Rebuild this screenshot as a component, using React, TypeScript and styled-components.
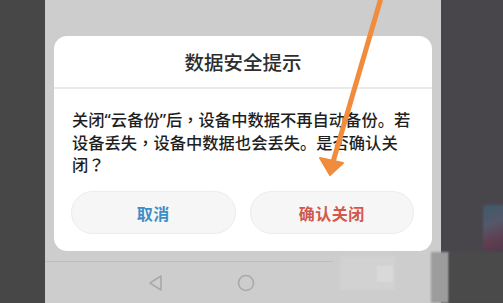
import React from 'react';
import styled, { createGlobalStyle } from 'styled-components';

const GlobalStyle = createGlobalStyle`
    html, body {
        margin: 0;
        padding: 0;
        background: #474747;
    }
    * {
        box-sizing: border-box;
    }
`;

const Screen = styled.div`
    position: relative;
    width: 503px;
    height: 303px;
    display: flex;
    overflow: hidden;
    font-family: 'Noto Sans CJK SC', 'Noto Sans', sans-serif;
`;

const SideStrip = styled.div<{ $width: number; $color: string }>`
    width: ${(p) => p.$width}px;
    flex-shrink: 0;
    background: ${(p) => p.$color};
`;

const RightSide = styled.div`
    position: relative;
    flex: 1;
    background: #48464b;
`;

const Phone = styled.div`
    width: 396px;
    flex-shrink: 0;
    display: flex;
    flex-direction: column;
    padding-top: 36px;
    background: #cdcdcd;
`;

const Dialog = styled.div`
    margin: 0 9px;
    background: #ffffff;
    border-radius: 13px;
    display: flex;
    flex-direction: column;
`;

const Title = styled.div`
    height: 53px;
    display: flex;
    align-items: center;
    justify-content: center;
    font-size: 19.5px;
    font-weight: 500;
    color: #2e2e2e;
    border-bottom: 2px solid #ebebeb;
`;

const Message = styled.div`
    padding: 19px 18px 0 18px;
    font-size: 16.3px;
    font-weight: 500;
    line-height: 22px;
    color: #1f1f1f;
`;

// narrow curly quotes, as the device font draws them
const Quote = styled.span`
    font-family: 'Noto Sans', sans-serif;
`;

// centred full-width comma and question mark
const Punct = styled.span`
    font-family: 'Noto Sans CJK TC', sans-serif;
`;

const Actions = styled.div`
    display: flex;
    gap: 14px;
    padding: 16px 18px 17px 17px;
`;

const ActionButton = styled.button<{ $color: string }>`
    flex: 1;
    height: 43px;
    border: 1px solid #ececec;
    border-radius: 22px;
    background: #f6f6f6;
    color: ${(p) => p.$color};
    font-family: inherit;
    font-size: 16px;
    font-weight: 700;
    letter-spacing: 0.5px;
`;

const NavBar = styled.div`
    margin-top: 10px;
    flex: 1;
    display: flex;
    align-items: center;
    padding-left: 101px;
    gap: 70px;
    border-top: 1px solid #bdbdbd;
    width: 288px;
`;

const NavIcon = styled.svg`
    width: 20px;
    height: 20px;
`;

const Blur = styled.div<{ $x: number; $y: number; $w: number; $h: number; $color: string }>`
    position: absolute;
    left: ${(p) => p.$x}px;
    top: ${(p) => p.$y}px;
    width: ${(p) => p.$w}px;
    height: ${(p) => p.$h}px;
    background: ${(p) => p.$color};
    filter: blur(1px);
`;

const Thumb = styled.div`
    position: absolute;
    left: 42px;
    top: 205px;
    width: 22px;
    height: 47px;
    border-radius: 3px 0 0 0;
    background: linear-gradient(160deg, #3c6377 0%, #5b6078 40%, #6a3d55 70%, #53344a 100%);
    opacity: 0.7;
    filter: blur(1px);
`;

const Arrow = styled.svg`
    position: absolute;
    left: 0;
    top: 0;
    pointer-events: none;
`;

export default function App() {
    return (
        <>
            <GlobalStyle />
            <Screen>
                <SideStrip $width={45} $color="#474747" />
                <Phone>
                    <Dialog>
                        <Title>数据安全提示</Title>
                        <Message>
                            关闭<Quote>“</Quote>云备份<Quote>”</Quote>后<Punct>，</Punct>设备中数据不再自动备份。若设备丢失
                            <Punct>，</Punct>设备中数据也会丢失。是否确认关闭<Punct>？</Punct>
                        </Message>
                        <Actions>
                            <ActionButton $color="#3d8ec6">取消</ActionButton>
                            <ActionButton $color="#d2584c">确认关闭</ActionButton>
                        </Actions>
                    </Dialog>
                    <NavBar>
                        <NavIcon viewBox="0 0 20 20">
                            <path d="M15 3 L4 10 L15 17 Z" fill="none" stroke="#a9a9a9" strokeWidth="1.6" strokeLinejoin="round" />
                        </NavIcon>
                        <NavIcon viewBox="0 0 20 20">
                            <circle cx="10" cy="10" r="7.5" fill="none" stroke="#a9a9a9" strokeWidth="1.6" />
                        </NavIcon>
                    </NavBar>
                </Phone>
                <RightSide>
                    <Thumb />
                    <Blur $x={-10} $y={252} $w={18} $h={51} $color="#9c9c9c" />
                    <Blur $x={8} $y={252} $w={60} $h={51} $color="#4a4a4a" />
                </RightSide>
                <Blur $x={340} $y={256} $w={55} $h={34} $color="#d2d2d2" />
                <Blur $x={377} $y={266} $w={16} $h={16} $color="#d9d9d9" />
                <Arrow width="503" height="303" viewBox="0 0 503 303">
                    <line x1="381" y1="-2" x2="333" y2="162" stroke="#f08c3c" strokeWidth="5" strokeLinecap="round" />
                    <path d="M330 175 L320 158 L343 163 Z" fill="#f08c3c" stroke="#f08c3c" strokeWidth="2" strokeLinejoin="round" />
                </Arrow>
            </Screen>
        </>
    );
}
